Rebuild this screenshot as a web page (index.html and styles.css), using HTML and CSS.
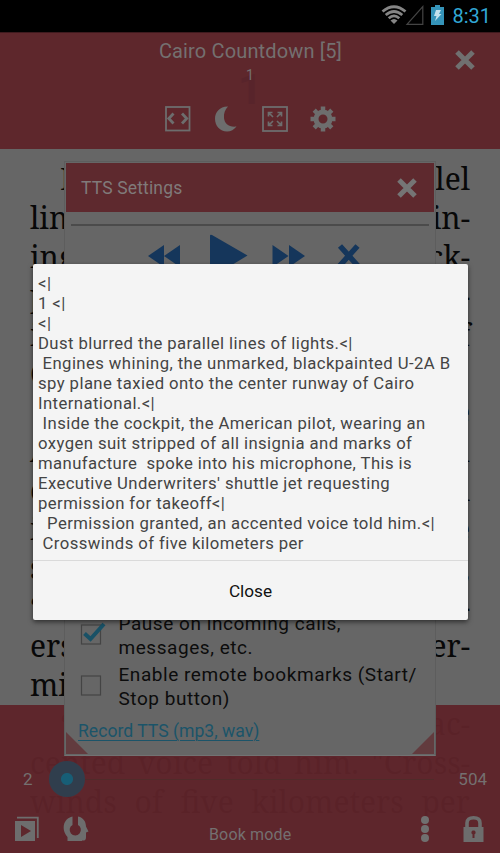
FILE: index.html
```html
<!DOCTYPE html>
<html lang="en">
<head>
<meta charset="utf-8">
<title>Cairo Countdown</title>
<link rel="stylesheet" href="styles.css">
</head>
<body>
<div class="screen">
  <div class="layer book">
    <p class="indent">Dust blurred the parallel</p>
    <p>lines of lights. Engines whin-</p>
    <p>ing, the unmarked, black-</p>
    <p>painted U-2A spy plane tax-</p>
    <p>ied onto the runway of</p>
    <p class="last">Cairo International.</p>
    <p class="indent">Inside the cockpit, the</p>
    <p>American pilot, wearing an</p>
    <p>oxygen suit stripped of all</p>
    <p>insignia and manufacture</p>
    <p>spoke into his microphone,</p>
    <p>“This is Executive Under-</p>
    <p>ers’ shuttle requesting per-</p>
    <p class="last">mission for takeoff.”</p>
    <p class="indent">“Permission granted, an ac-</p>
    <p>cented voice told him. "Cross-</p>
    <p>winds of five kilometers per</p>
  </div>

  <div class="layer chrome">
    <header>
      <div class="status">
        <svg width="68" height="20" viewBox="0 0 68 20">
          <g fill="none" stroke="#858585" stroke-width="2.8"><path d="M2.500 6.500Q14 -3 25.500 6.500M5.700 10Q14 3 22.300 10M8.700 13.300Q14 8.500 19.300 13.300"/></g>
          <path d="M10.500 15.500q3.500-3 7 0L14 19z" fill="#858585"/>
          <path d="M27 19.400H42.800V1.500z" fill="none" stroke="#444" stroke-width="1.200"/>
          <path d="M51 2h4V0h5v2h4v18H51z" fill="#3594b9"/>
          <path d="M56 5h5l-2 4h2.500l-6.500 7 1.500-5H54z" fill="#c3e2ed"/>
        </svg>
        <span>8:31</span>
      </div>
      <div class="topbar">
        <div class="title">Cairo Countdown [5]</div>
        <div class="chapter"><b>1</b><span>1</span></div>
        <svg class="close" width="22" height="22" viewBox="0 0 22 22"><path d="M3 3l16 16M19 3L3 19" stroke="#707070" stroke-width="5"/></svg>
        <div class="tools">
          <svg width="26" height="26" viewBox="0 0 26 26" fill="none" stroke="#6d6d6d"><rect x="1" y="1" width="23.500" height="23.500" stroke-width="1.800"/><path d="M8.500 7.500L3.800 12.500l4.700 5M17 7.500l4.700 5-4.700 5" stroke-width="2.800"/></svg>
          <svg width="26" height="26" viewBox="0 0 26 26"><path d="M14 .5C6 .2 1 6 1 12.500 1 20 6 25.500 13 25.500c4 0 7-2 9.500-5C15 21.500 10.500 17.500 10 12c-.4-4.500 1-8.500 4-11.500z" fill="#6d6d6d"/></svg>
          <svg width="26" height="26" viewBox="0 0 26 26" fill="none" stroke="#6d6d6d"><rect x="1" y="1" width="24" height="24" stroke-width="1.800"/><path d="M6.500 10.500v-4h4M7 7l4 4M15.500 6.500h4v4M19 7l-4 4M6.500 15.500v4h4M7 19l4-4M19.500 15.500v4h-4M19 19l-4-4" stroke-width="1.700"/></svg>
          <svg width="26" height="26" viewBox="0 0 26 26"><g stroke="#6d6d6d" fill="none"><circle cx="12" cy="13" r="7" stroke-width="5"/><path d="M12 .5v4M12 21.500v4M-.5 13h4M20.500 13h4M3.200 4.200L6 7M18 19l2.800 2.800M20.800 4.200L18 7M6 19l-2.800 2.800" stroke-width="4.500"/></g></svg>
        </div>
      </div>
    </header>
    <footer>
      <div class="seek">
        <span>2</span>
        <div class="track"><i></i></div>
        <span>504</span>
      </div>
      <div class="actions">
        <svg width="24" height="26" viewBox="0 0 24 26"><path d="M0 5h20v20H0z" fill="#6d6d6d"/><path d="M2 1.700h20.800V22" fill="none" stroke="#6d6d6d" stroke-width="1.800"/><path d="M6 9l10 6-10 6z" fill="#5e272c"/></svg>
        <svg class="head" width="26" height="26" viewBox="0 0 26 26"><path d="M4.500 25V21C-2 14 0 2.500 9.500.6V9a5.600 5.600 0 1 0 5.500 0V.6c6 1.200 8 6 8 9.900l2.500 5-2.500 1v5c0 3-2 3.200-4 3V25z" fill="#6d6d6d"/></svg>
        <span>Book mode</span>
        <svg class="dots" width="8" height="26" viewBox="0 0 8 26" fill="#707070"><circle cx="4" cy="4" r="4"/><circle cx="4" cy="13" r="4"/><circle cx="4" cy="22" r="4"/></svg>
        <svg width="21" height="26" viewBox="0 0 21 26"><path d="M4 12V7q0-5.200 6.500-5.200T17 7v5" fill="none" stroke="#6d6d6d" stroke-width="3.600"/><path d="M.5 11h20v15H.5z" fill="#6d6d6d"/><path d="M10.500 14.500a2 2 0 0 1 1 3.800V22h-2v-3.700a2 2 0 0 1 1-3.800z" fill="#5e272c"/></svg>
      </div>
    </footer>
  </div>

  <div class="layer popup">
    <div class="popup-head"><span>TTS Settings</span>
      <svg width="22" height="22" viewBox="0 0 22 22"><path d="M3 3l16 16M19 3L3 19" stroke="#757575" stroke-width="5"/></svg>
    </div>
    <hr>
    <div class="player">
      <svg width="202" height="46" viewBox="0 0 202 46" fill="#15365b"><path d="M0 22L16 11v22zM16 22L32 11v22zM62 2q0-2 2-1L99.500 21.500 64 43q-2 1-2-1zM124.500 11l16 11-16 11zM141 11l16 11-16 11z"/><path d="M192 12l18 20M209.500 12l-18 20" stroke="#15365b" stroke-width="5.500"/></svg>
    </div>
    <div class="options">
      <div class="option">
        <svg width="26" height="24" viewBox="0 0 26 24"><rect x="1.500" y="1" width="19" height="19" fill="none" stroke="#444" stroke-width="1.200"/><path d="M4.500 9.500l6 5.500L24 0" fill="none" stroke="#195166" stroke-width="4"/></svg>
        <div>Pause on incoming calls,<br>messages, etc.</div>
      </div>
      <div class="option">
        <svg width="26" height="24" viewBox="0 0 26 24"><rect x="1.500" y="1" width="19" height="19" fill="none" stroke="#444" stroke-width="1.200"/></svg>
        <div>Enable remote bookmarks (Start/<br>Stop button)</div>
      </div>
    </div>
    <div class="record"><a>Record TTS (mp3, wav)</a></div>
    <div class="grips"><i class="left"></i><i class="right"></i></div>
  </div>

  <div class="layer dialog">
    <pre>&lt;|
1 &lt;|
&lt;|
Dust blurred the parallel lines of lights.&lt;|
 Engines whining, the unmarked, blackpainted U-2A B
spy plane taxied onto the center runway of Cairo
International.&lt;|
 Inside the cockpit, the American pilot, wearing an
oxygen suit stripped of all insignia and marks of
manufacture  spoke into his microphone, This is
Executive Underwriters' shuttle jet requesting
permission for takeoff&lt;|
  Permission granted, an accented voice told him.&lt;|
 Crosswinds of five kilometers per</pre>
    <div class="button">Close</div>
  </div>
</div>
</body>
</html>
```

FILE: styles.css
```css
* { box-sizing: border-box; }
body { margin: 0; font-family: Roboto, "Liberation Sans", sans-serif; color: #0c0c0c; }
svg { display: block; flex: none; overflow: visible; }
.screen { display: grid; width: 500px; height: 853px; overflow: hidden; background: #666; }
.layer { grid-area: 1 / 1; min-width: 0; min-height: 0; }

.book { z-index: 1; padding: 160px 30px 0; font: 30px/38.9px "Droid Serif", "Noto Serif", "DejaVu Serif Condensed", "DejaVu Serif", serif; color: #080808; overflow: hidden; }
.book p { margin: 0; white-space: nowrap; text-align: justify; text-align-last: justify; }
.book .indent { padding-left: 30px; }
.book .last { text-align-last: left; }

.chrome { z-index: 2; display: flex; flex-direction: column; justify-content: space-between; }
.status { height: 32px; background: #000; display: flex; justify-content: flex-end; align-items: center; gap: 4px; padding: 0 9px 0 0; color: #31a8d6; font-size: 20px; }
.status svg { margin-top: -2px; }
.topbar { position: relative; height: 117px; background: #5e272c; border-top: 1px solid #3f1a1e; color: #747070; text-align: center; }
.title { padding: 6px 0 0 1px; font-size: 20px; line-height: 24px; letter-spacing: .15px; }
.chapter { position: relative; font-size: 14px; line-height: 18px; margin-top: 3px; }
.chapter span { position: relative; }
.chapter b { position: absolute; left: 238px; top: 3px; font: bold 42px/42px Roboto, sans-serif; color: #58242b; }
.close { position: absolute; left: 454px; top: 16px; }
.tools { display: flex; justify-content: center; gap: 22.500px; margin: 22px 0 0 2px; }

footer { height: 148px; background: rgba(94, 36, 42, .955); color: #747070; padding: 52px 15px 0; font-size: 17px; }
.seek { display: flex; align-items: center; height: 44px; }
.seek span:first-child { width: 53px; padding-left: 8px; }
.seek span:last-child { margin-left: auto; margin-right: -2px; }
.track { width: 366px; height: 1px; background: #502b2a; display: flex; align-items: center; }
.track i { flex: none; width: 36px; height: 36px; margin-left: -19px; border-radius: 50%; background: radial-gradient(circle, #175e76 0 5.500px, #303e4d 6.500px); }
.actions { display: flex; align-items: center; margin-top: 12px; }
.head { margin-left: 24px; }
.actions span { margin-left: 120px; padding-top: 12px; width: 90px; font-size: 16px; white-space: nowrap; letter-spacing: .15px; }
.dots { margin-left: 122px; margin-right: 34px; }

.popup { position: relative; z-index: 4; align-self: start; width: 372px; height: 595px; margin: 161px 0 0 64px; padding: 1px; background: #666; border: 1px solid #5d5d5d; border-bottom-color: #727272; display: flex; flex-direction: column; }
.popup-head { height: 49px; flex: none; background: #5e292e; display: flex; align-items: center; justify-content: space-between; padding: 0 16px 0 15px; color: #807a7a; font-size: 17.5px; letter-spacing: .15px; }
.popup hr { width: 358px; height: 2px; margin: 12px auto 8px; border: 0; background: #4b4b4b; flex: none; }
.player { display: flex; padding-left: 82px; }
.options { margin-top: 332px; display: grid; gap: 4px; }
.option { display: flex; align-items: center; gap: 12.5px; padding-left: 14px; font-size: 19px; line-height: 23.5px; letter-spacing: .55px; white-space: nowrap; }
.record { padding-left: 12px; margin-top: 9px; font-size: 17.6px; line-height: 24px; color: #1b5469; }
.record a { text-decoration: underline; text-underline-offset: 3px; text-decoration-thickness: 1px; }
.grips { position: absolute; left: 1px; right: 1px; bottom: 1px; display: flex; justify-content: space-between; }
.grips i { width: 22px; height: 22px; background: #623b3e; }
.left { clip-path: polygon(0 0, 100% 100%, 0 100%); }
.right { clip-path: polygon(100% 0, 100% 100%, 0 100%); }

.dialog { z-index: 5; align-self: start; width: 435px; height: 356px; margin: 264px 0 0 33px; background: #f4f4f4; border-radius: 2px; box-shadow: 0 2px 5px rgba(0, 0, 0, .55); display: flex; flex-direction: column; }
.dialog pre { margin: 0; height: 296px; padding: 10px 5px 0; font: 16.7px/20px Roboto, "Liberation Sans", sans-serif; letter-spacing: .42px; color: #444; }
.button { flex: 1; border-top: 1px solid #dadada; display: flex; align-items: center; justify-content: center; font-size: 17.2px; color: #111; }
```
